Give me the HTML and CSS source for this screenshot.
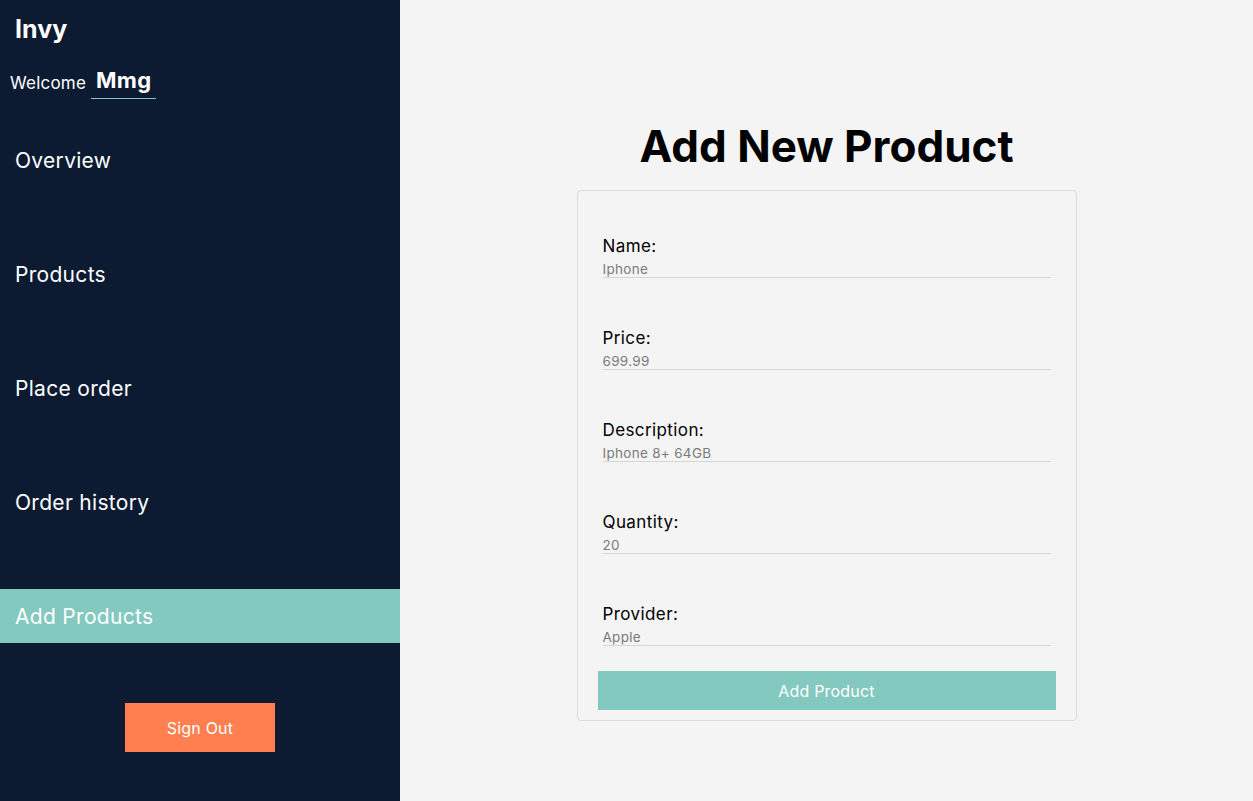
FILE: index.html
```html
<!DOCTYPE html>
<html lang="en">
<head>
<meta charset="utf-8">
<title>Invy - Add Product</title>
<link rel="stylesheet" href="styles.css">
</head>
<body>
<div class="app">
  <aside class="sidebar">
    <div class="brand">Invy</div>
    <div class="welcome">
      <span class="welcome-label">Welcome</span>
      <span class="welcome-user">Mmg</span>
    </div>
    <nav class="nav">
      <a class="nav-item" href="#">Overview</a>
      <a class="nav-item" href="#">Products</a>
      <a class="nav-item" href="#">Place order</a>
      <a class="nav-item" href="#">Order history</a>
      <a class="nav-item active" href="#">Add Products</a>
    </nav>
    <div class="signout-wrap">
      <button class="signout" type="button">Sign Out</button>
    </div>
  </aside>
  <main class="main">
    <h1 class="title">Add New Product</h1>
    <form class="card">
      <div class="field">
        <label class="field-label">Name:</label>
        <input class="field-input" type="text" placeholder="Iphone">
      </div>
      <div class="field">
        <label class="field-label">Price:</label>
        <input class="field-input" type="text" placeholder="699.99">
      </div>
      <div class="field">
        <label class="field-label">Description:</label>
        <input class="field-input" type="text" placeholder="Iphone 8+ 64GB">
      </div>
      <div class="field">
        <label class="field-label">Quantity:</label>
        <input class="field-input" type="text" placeholder="20">
      </div>
      <div class="field last">
        <label class="field-label">Provider:</label>
        <input class="field-input" type="text" placeholder="Apple">
      </div>
      <button class="submit" type="button">Add Product</button>
    </form>
  </main>
</div>
</body>
</html>
```

FILE: styles.css
```css
* { box-sizing: border-box; }
html, body { margin: 0; padding: 0; }
body {
  font-family: Inter, "Open Sans", sans-serif;
  background: #f4f4f4;
  color: #000;
}
.app {
  display: flex;
  height: 801px;
}
.sidebar {
  width: 400px;
  flex: 0 0 400px;
  background: #0c1b32;
  color: #fff;
  display: flex;
  flex-direction: column;
}
.brand {
  height: 58px;
  padding: 14px 0 0 15px;
  font-size: 25px;
  line-height: 30px;
  font-weight: 700;
}
.welcome {
  height: 41px;
  display: flex;
  align-items: flex-end;
  padding-left: 10px;
}
.welcome-label {
  font-size: 17px;
  line-height: 20px;
  padding-bottom: 6px;
  letter-spacing: 0.2px;
}
.welcome-user {
  margin-left: 5px;
  padding: 0 5px 6px;
  font-size: 22px;
  line-height: 24px;
  font-weight: 700;
  letter-spacing: 0.3px;
  border-bottom: 1px solid #83c9c0;
}
.nav {
  margin-top: 34px;
  display: flex;
  flex-direction: column;
  gap: 60px;
}
.nav-item {
  display: block;
  height: 54px;
  line-height: 54px;
  padding: 1px 0 0 15px;
  font-size: 21px;
  letter-spacing: 0.3px;
  color: #fff;
  text-decoration: none;
}
.nav-item.active {
  background: #83c9c0;
}
.signout-wrap {
  display: flex;
  justify-content: center;
  margin-top: 60px;
}
.signout {
  width: 150px;
  height: 49px;
  border: none;
  background: #ff7f50;
  color: #fff;
  font-family: inherit;
  font-size: 16px;
  letter-spacing: 0.2px;
}
.main {
  flex: 1;
  display: flex;
  flex-direction: column;
  align-items: center;
  padding-top: 119px;
}
.title {
  margin: 0 0 16px;
  font-size: 44px;
  line-height: 55px;
  font-weight: 700;
}
.card {
  width: 500px;
  border: 1px solid #dcdcdc;
  border-radius: 4px;
  padding: 45px 20px 10px;
  display: flex;
  flex-direction: column;
}
.field {
  display: flex;
  flex-direction: column;
  margin: 0 5px 50px;
}
.field.last { margin-bottom: 25px; }
.field-label {
  font-size: 17px;
  line-height: 20px;
  letter-spacing: 0.4px;
}
.field-input {
  margin-top: 2px;
  height: 20px;
  padding: 3px 0 0;
  border: none;
  border-bottom: 1px solid #d6d6d6;
  background: transparent;
  font-family: inherit;
  font-size: 13.5px;
  letter-spacing: 0.3px;
  color: #777;
  outline: none;
}
.field-input::placeholder { color: #7a7a7a; opacity: 1; }
.submit {
  height: 39px;
  border: none;
  background: #83c9c0;
  color: #fff;
  font-family: inherit;
  font-size: 16px;
  letter-spacing: 0.2px;
}
```
